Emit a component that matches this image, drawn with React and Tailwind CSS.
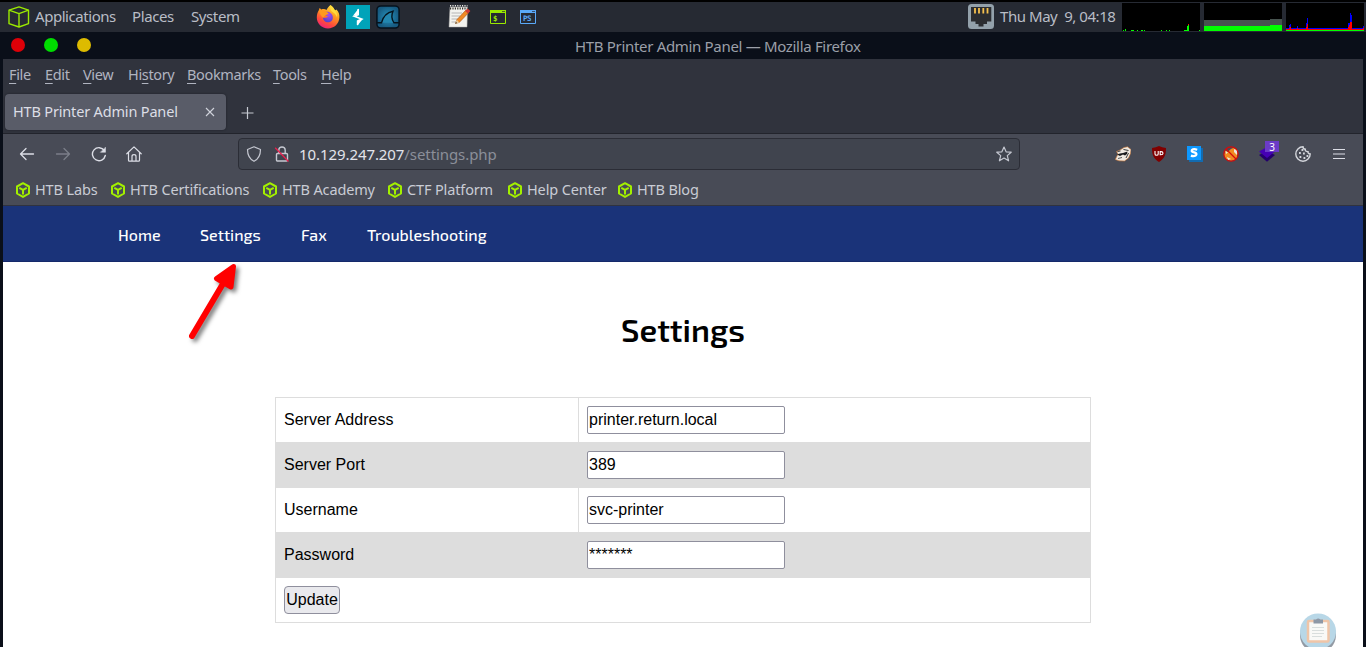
import React from "react";

const UI = "font-['Noto_Sans',sans-serif]";

function Cube({ className }) {
  return (
    <svg className={className} viewBox="0 0 16 16" fill="none" stroke="#a3f000" strokeWidth="2" strokeLinejoin="round">
      <path d="M8 1.200 14 4.500V11.500L8 14.900 2 11.500V4.500Z" />
      <path d="M4.300 5.800 8 7.900 11.700 5.800M8 7.900V12.600" />
    </svg>
  );
}

function PanelCube() {
  return (
    <svg className="h-[22px] w-[22px]" viewBox="0 0 22 22" fill="none" stroke="#9bea00" strokeWidth="1.4" strokeLinejoin="round">
      <path d="M11 .9 20.500 4.200V17.600L11 21 1 17.600V4.200Z" />
      <path d="M1 4.200 11 7.600 20.500 4.200M11 7.600V21" />
    </svg>
  );
}

function FirefoxIcon() {
  return (
    <svg className="h-6 w-6" viewBox="0 0 24 24">
      <defs>
        <linearGradient id="fx" x1="0.8" y1="0" x2="0.3" y2="1">
          <stop offset="0" stopColor="#fff04a" />
          <stop offset=".4" stopColor="#ff9a1f" />
          <stop offset=".75" stopColor="#ff4a3c" />
          <stop offset="1" stopColor="#f0207c" />
        </linearGradient>
        <radialGradient id="fp" cx=".6" cy=".3" r=".8">
          <stop offset="0" stopColor="#a64cf0" />
          <stop offset="1" stopColor="#4a40c8" />
        </radialGradient>
      </defs>
      <path d="M14.500 0C17 1.400 18 3.500 18.500 5 20 5.500 20.500 4.500 20.500 4.500 23 7 23.600 10 23.400 12.500 23 19 18 23.400 12 23.400 5.600 23.400.8 18.500.8 12.500.8 9.500 1.600 7.200 2.800 5.200L3.600 3 5.400 4.600C7 3.800 9 4 10.500 5 11.600 3 12.800 1.200 14.500 0Z" fill="url(#fx)" />
      <path d="M8.500 7.500C11 5.500 16.500 7.500 16.800 12 17 15.800 14.500 17.300 12.300 17.300 9 17.300 7 15 7 12.500 9 13.500 11 12.500 12 11.200 9.500 11 8 9.500 8.500 7.500Z" fill="url(#fp)" />
      <path d="M3 5.500C5 4.500 8 5 9.500 7 11 7 12.400 7.600 12.600 8.600 12 10 9.500 9.600 8.500 11 8.300 12 7.600 12.500 7 12.500 5 11 3.500 8.500 3 5.500Z" fill="#ff9a1f" />
      <path d="M14.500.2C18 3 22 8 21 12.500 20.500 10 19 9 18 8 15 6 13.500 4 14.500.2Z" fill="#ffdd3c" />
    </svg>
  );
}

function BurpIcon() {
  return (
    <svg className="h-6 w-6" viewBox="0 0 24 24">
      <path d="M0 0H24V24H0Z" fill="#00a3b9" />
      <path d="M12.200 4V9.800L8.300 11.300 15.700 14 11.600 16V20" fill="none" stroke="#fff" strokeWidth="1.600" />
      <path d="M7 10.800 12.600 3.500V9.500ZM17 13.800 11.200 20.700V16Z" fill="#fff" />
    </svg>
  );
}

function SharkIcon() {
  return (
    <svg className="h-6 w-6" viewBox="0 0 24 24">
      <defs>
        <radialGradient id="sh"><stop offset="0" stopColor="#2592bd" /><stop offset="1" stopColor="#175a80" /></radialGradient>
      </defs>
      <rect x=".9" y=".9" width="22.200" height="22.200" rx="4" fill="url(#sh)" stroke="#06121c" strokeWidth="1.500" />
      <path d="M1 17.800H5.500C7 12 10.500 7.500 17 6.300 15.200 10.300 15.500 14.300 18 17.800H23" fill="#2387b0" stroke="#05141e" strokeWidth="1.400" />
    </svg>
  );
}

function NotepadIcon() {
  return (
    <svg className="h-[23px] w-[23px]" viewBox="0 0 23 23">
      <path d="M2 2H19.500L19 22H1Z" fill="#f3f3ef" stroke="#aaa" strokeWidth=".5" />
      <path d="M2 3.500H19.500" stroke="#35352f" strokeWidth="2" strokeDasharray="1.200 1.200" />
      <path d="M2 .8H19.500" stroke="#e8e8e4" strokeWidth="1.500" strokeDasharray="1.200 1.200" />
      <path d="M3.500 8H14M3.500 11H12M3.500 14H10M3.500 17H9" stroke="#b5b5b5" />
      <path d="M7.500 18.500 8.800 14.800 17.500 5.500 20.300 8 11.300 17.400Z" fill="#f08a24" stroke="#a95516" strokeWidth=".6" />
      <path d="M17 6 19.500 3.500 22.400 6 20 8.500Z" fill="#d13c35" />
      <path d="M7.300 18.700 8.800 14.800 11.300 17.400Z" fill="#e8cda0" />
      <path d="M7.300 18.700 8 17 9 18.100Z" fill="#222" />
    </svg>
  );
}

function TerminalIcon({ color, label, wide }) {
  return (
    <svg className="h-[14px] w-4" viewBox="0 0 16 14">
      <path d="M.5.5H15.500V13.500H.5Z" fill="none" stroke={color} />
      <path d="M0 0H16V3H0Z" fill={color} />
      <path d="M12 1.500H15" stroke="#262a33" strokeWidth=".7" />
      <text x="3" y="10.500" fill={color} fontSize="7.500" fontWeight="700" fontFamily="DejaVu Sans Mono, monospace" textLength={wide ? 8.5 : 4.5}>{label}</text>
    </svg>
  );
}

function EthernetIcon() {
  return (
    <svg className="h-[25px] w-[26px]" viewBox="0 0 26 25">
      <rect width="26" height="25" rx="3.500" fill="#93a1ab" />
      <path d="M3 3H23.300V17.500H19V20H15.500V22.500H10.500V20H7.500V17.500H3Z" fill="#2b2d31" />
      <path d="M7 4V9.500M11 4V9.500M15.300 4V9.500M19.500 4V9.500" stroke="#f5c04e" strokeWidth="1.800" />
    </svg>
  );
}

const cpuBars = [[1, 1], [3, 2], [9, 1], [10, 1], [11, 1], [15, 1], [19, 1], [20, 1], [22, 1], [39, 1], [44, 1], [47, 1], [62, 1], [63, 1], [64, 1], [65, 5], [66, 7], [77, 1]];

function Graphs() {
  return (
    <div className="flex gap-1 pt-[1px]">
      <svg className="h-7 w-[78px] bg-black" viewBox="0 0 78 28" shapeRendering="crispEdges">
        {cpuBars.map(([x, h]) => <rect key={x} x={x} y={28 - h} width="1" height={h} fill="#00ff00" />)}
        <rect x="66" y="21" width="1" height="1" fill="#ff0000" />
      </svg>
      <svg className="h-7 w-[78px] bg-black" viewBox="0 0 78 28" shapeRendering="crispEdges">
        <path d="M0 17H66V16H78V28H0Z" fill="#47534f" />
        <path d="M0 23H66V22H78V28H0Z" fill="#00ff00" />
      </svg>
      <svg className="h-7 w-[78px] bg-black" viewBox="0 0 78 28" shapeRendering="crispEdges">
        <path d="M0 25H3V22H4V21H5V25H11V23H12V25H20V20H21V15H22V25H62V20H64V10H65V12H66V25H77V23H78V27H0Z" fill="#0000ff" />
        <path d="M0 26H3V25H4V24H5V26H11V25H12V26H20V24H21V21H22V26H62V24H63V22H64V19H66V26H77V25H78V27H0Z" fill="#ff0000" />
        <path d="M0 27H78V28H0Z" fill="#00ff00" />
      </svg>
    </div>
  );
}

function SystemPanel() {
  return (
    <div className={`${UI} flex h-8 shrink-0 items-center border-t-2 border-black bg-[#262a33] pb-[1px] text-[15px] text-[#b9bdc6]`}>
      <div className="ml-2 w-[27px] shrink-0"><PanelCube /></div>
      <span className="w-[97px] shrink-0 tracking-[-0.45px]">Applications</span>
      <span className="w-[59px] shrink-0 tracking-[-0.4px]">Places</span>
      <span className="w-[125px] shrink-0 tracking-[-0.4px]">System</span>
      <div className="flex items-center">
        <FirefoxIcon />
        <div className="ml-[6px]"><BurpIcon /></div>
        <div className="ml-[6px]"><SharkIcon /></div>
        <div className="ml-12"><NotepadIcon /></div>
        <div className="ml-[19px]"><TerminalIcon color="#9bea00" label="$" /></div>
        <div className="ml-[14px]"><TerminalIcon color="#5aa9f8" label="PS" wide /></div>
      </div>
      <div className="ml-auto flex items-center pr-[2px]">
        <EthernetIcon />
        <span className="ml-[6px] w-[122px] whitespace-pre tracking-[-0.45px]">Thu May  9, 04:18</span>
        <Graphs />
      </div>
    </div>
  );
}

function TitleBar() {
  return (
    <div className={`${UI} flex h-[27px] shrink-0 items-center text-[#9b9fa8]`}>
      <div className="flex w-[575px] shrink-0 gap-[19px] pb-[1px] pl-[11px]">
        <span className="h-[14px] w-[14px] rounded-full bg-[#dd0008]" />
        <span className="h-[14px] w-[14px] rounded-full bg-[#00dd00]" />
        <span className="h-[14px] w-[14px] rounded-full bg-[#ddbb00]" />
      </div>
      <span className="whitespace-nowrap pt-[2px] text-[15px] tracking-[-0.32px]">HTB Printer Admin Panel — Mozilla Firefox</span>
    </div>
  );
}

const menus = [
  ["", "F", "ile", "w-[36px]"],
  ["", "E", "dit", "w-[38px]"],
  ["", "V", "iew", "w-[45px]"],
  ["Hi", "s", "tory", "w-[59px]"],
  ["", "B", "ookmarks", "w-[86px]"],
  ["", "T", "ools", "w-[48px]"],
  ["", "H", "elp", "w-[48px]"],
];

function MenuBar() {
  return (
    <div className="flex h-[33px] items-center pb-[1px] pl-[6px] tracking-[-0.35px] text-[#b0b4c0]">
      {menus.map(([a, u, b, w]) => (
        <span key={u + b} className={`${w} shrink-0 whitespace-nowrap`}>
          {a}<span className="underline underline-offset-[3px]">{u}</span>{b}
        </span>
      ))}
    </div>
  );
}

function TabStrip() {
  return (
    <div className="flex h-[42px] shrink-0 border-b border-[#22242c] pt-[2px]">
      <div className="ml-[2px] flex h-9 w-[221px] items-center rounded-[4px] bg-[#595c68] pl-2 text-[#dcdee6] shadow-[0_0_2px_#1b1d24]">
        <span className="w-[192px] whitespace-nowrap tracking-[-0.17px]">HTB Printer Admin Panel</span>
        <svg className="h-[10px] w-[10px]" viewBox="0 0 10 10" stroke="#d0d3db" strokeWidth="1.100"><path d="M1 1 9 9M9 1 1 9" /></svg>
      </div>
      <svg className="ml-[15px] mt-[13px] h-3 w-[13px]" viewBox="0 0 13 12" stroke="#c6cad2" strokeWidth="1.200"><path d="M.5 6H12.500M6.500 0V12" /></svg>
    </div>
  );
}

function NavButtons() {
  return (
    <div className="flex w-[235px] shrink-0 items-center pl-4 text-[#dcdee6]">
      <svg className="h-4 w-4" viewBox="0 0 16 16" fill="none" stroke="currentColor" strokeWidth="1.300" strokeLinecap="round" strokeLinejoin="round"><path d="M14.500 8H1.500M7 2.500 1.500 8 7 13.500" /></svg>
      <svg className="ml-5 h-4 w-4 text-[#7b7e89]" viewBox="0 0 16 16" fill="none" stroke="currentColor" strokeWidth="1.300" strokeLinecap="round" strokeLinejoin="round"><path d="M1.500 8H14.500M9 2.500 14.500 8 9 13.500" /></svg>
      <svg className="ml-5 h-4 w-4" viewBox="0 0 16 16" fill="none" stroke="currentColor" strokeWidth="1.400" strokeLinecap="round" strokeLinejoin="round">
        <path d="M14.300 9.500A6.500 6.500 0 1 1 13.300 4.500" /><path d="M14.500 1.500V6.300H9.700Z" fill="currentColor" strokeWidth=".5" />
      </svg>
      <svg className="ml-[19px] h-4 w-4" viewBox="0 0 16 16" fill="none" stroke="currentColor" strokeWidth="1.200" strokeLinecap="round" strokeLinejoin="round">
        <path d="M.8 7.800 8 .9 15.200 7.800M2.500 6.300V14.200Q2.500 15.200 3.500 15.200H12.500Q13.500 15.200 13.500 14.200V6.300M6 15V10.500Q6 8.700 8 8.700T10 10.500V15" />
      </svg>
    </div>
  );
}

function UrlBar() {
  return (
    <div className="flex h-8 w-[782px] shrink-0 items-center rounded-[4px] border border-[#2b2d36] bg-[#40444e] pl-[7px]">
      <svg className="h-4 w-4" viewBox="0 0 16 16" fill="none" stroke="#c5c8d1" strokeWidth="1.200" strokeLinejoin="round"><path d="M8 .8 14.500 3.500C14.500 9 12.500 13 8 15.300 3.500 13 1.500 9 1.500 3.500Z" /></svg>
      <svg className="ml-3 h-4 w-4" viewBox="0 0 16 16" fill="none" stroke="#c5c8d1" strokeWidth="1.400">
        <rect x="2.500" y="7.500" width="11" height="7.500" rx="1" /><path d="M4.800 7.500V4Q5 1 8 1T11.200 4V7.500" />
        <path d="M1.200 1.800 14.500 15.500" stroke="#e8204e" strokeWidth="1.300" />
      </svg>
      <span className="ml-[9px] w-[697px] whitespace-nowrap text-[15px] tracking-[-0.08px] text-[#e3e5ec]">10.129.247.207<span className="text-[#8b8f99]">/settings.php</span></span>
      <svg className="h-4 w-4 shrink-0" viewBox="0 0 16 16" fill="none" stroke="#c5c8d1" strokeWidth="1.200" strokeLinejoin="round"><path d="M8 1 10.100 5.800 15.200 6.200 11.300 9.600 12.600 14.800 8 12 3.400 14.800 4.700 9.600.8 6.200 5.900 5.800Z" /></svg>
    </div>
  );
}

function Extensions() {
  return (
    <div className="ml-[95px] flex items-center gap-5">
      <svg className="h-4 w-4" viewBox="0 0 16 16">
        <path d="M.3 13.500 3 8 1.500 5.500 5 4 9 1.500 12.500.8 16 3.500 15.500 7.500 13.500 12 9.500 15 4 14.800Z" fill="#eee9e2" stroke="#d0752f" strokeWidth=".6" />
        <path d="M2 8.500 5 7.500 8 7 12.500 5.500 12 8 10 9.500 8 8.500 5 10Z" fill="#17191d" />
        <path d="M2.500 5.500 5.500 5M8.500 3.500 13.500 4.500M13.500 7 11 12" stroke="#222" strokeWidth=".9" />
        <path d="M3 12.500 7 11.500" stroke="#333" strokeWidth=".8" />
      </svg>
      <svg className="h-4 w-4" viewBox="0 0 16 16">
        <path d="M8 0Q11 1.700 15 2C15 9 13.500 12.500 8 16 2.500 12.500 1 9 1 2Q5 1.700 8 0Z" fill="#800000" />
        <path d="M4 5V8Q4 9.300 5.600 9.300T7.200 8V5M9.200 5V9.200M9.200 5.600H10Q12 5.600 12 7.200T10 8.800H9.200" fill="none" stroke="#fff" strokeWidth="1.100" />
      </svg>
      <svg className="h-4 w-4" viewBox="0 0 16 16">
        <path d="M2 2H16V16H2Z" fill="#126bb0" /><path d="M0 0H14V14H0Z" fill="#0d98ff" />
        <path d="M10.200 3.700Q6.500 2.400 4.900 4C3.700 6 7 6.100 8.700 6.900 11 8.800 7.700 11 3.900 9.600" fill="none" stroke="#fff" strokeWidth="2.200" />
      </svg>
      <svg className="h-4 w-4" viewBox="0 0 16 16">
        <path d="M2.500 4.500 5 6Q8 2 11 2L15 5 13.500 13 8 15 3 13 1 9Z" fill="#f18b20" />
        <path d="M11 3 14.500 4.500 14 9 11 6ZM4 11 8 13 5 14ZM2.500 5 5 6.500 3 8Z" fill="#eee8dd" />
        <circle cx="8" cy="8" r="7.200" fill="none" stroke="#d60b0b" strokeWidth="1.200" />
        <path d="M3 3 13 13" stroke="#d60b0b" strokeWidth="1.200" />
      </svg>
      <div className="relative">
        <svg className="h-4 w-4" viewBox="0 0 16 16">
          <path d="M0 9 8 4.500 16 9 8 15.800Z" fill="#24006d" /><path d="M0 5.500 8 1 16 5.500 8 12Z" fill="#4500b5" />
        </svg>
        <span className="absolute -top-[5px] left-[6px] flex h-[11px] w-[14px] items-center justify-center bg-[#6b3bc7] text-[10px] leading-none text-white">3</span>
      </div>
      <svg className="h-4 w-4" viewBox="0 0 16 16" fill="none" stroke="#d4d6dc" strokeWidth="1.400">
        <path d="M8 .8A7.200 7.200 0 1 0 15.200 8C13.700 8 12.800 7 13 5.700 11 5.800 10 4.800 10.300 3.300 9 3.300 8 2.300 8 .8Z" />
        <path d="M6.500 4H8.300M4 7H5.800M8 7.500H9.800M4.500 11H6.300M8.500 12H10.300M11.500 10H13.300" strokeWidth="1.800" />
      </svg>
      <svg className="h-4 w-4" viewBox="0 0 16 16" stroke="#dcdee6" strokeWidth="1.200"><path d="M2 3.500H14M2 8H14M2 12.500H14" /></svg>
    </div>
  );
}

const bookmarks = [
  ["HTB Labs", "w-[95px]"],
  ["HTB Certifications", "w-[152px]"],
  ["HTB Academy", "w-[125px]"],
  ["CTF Platform", "w-[120px]"],
  ["Help Center", "w-[110px]"],
  ["HTB Blog", "w-[100px]"],
];

function Bookmarks() {
  return (
    <div className="flex h-[31px] items-center pl-3 tracking-[-0.14px] text-[#c9ccd5]">
      {bookmarks.map(([label, w]) => (
        <div key={label} className={`${w} flex shrink-0 items-center whitespace-nowrap`}>
          <Cube className="mr-1 h-4 w-4 shrink-0" />{label}
        </div>
      ))}
    </div>
  );
}

const rows = [
  ["Server Address", "printer.return.local"],
  ["Server Port", "389"],
  ["Username", "svc-printer"],
  ["Password", "*******"],
];

function SettingsPage() {
  return (
    <div className="relative flex min-h-0 flex-1 flex-col bg-white text-black">
      <nav className="flex h-14 shrink-0 items-center border-b border-[#15296a] bg-[#1a3379] pb-[1px] pl-[115px] pt-1 font-['Exo_2','Noto_Sans',sans-serif] text-[16px] font-medium text-white">
        <span className="w-[82px]">Home</span>
        <span className="w-[101px]">Settings</span>
        <span className="w-[66px]">Fax</span>
        <span>Troubleshooting</span>
      </nav>
      <h1 className="mt-[43px] h-[92px] text-center font-['Exo_2','Noto_Sans',sans-serif] text-[32px] font-semibold leading-[48px]">Settings</h1>
      <div className="ml-[272px] flex h-[226px] w-[816px] shrink-0 flex-col border border-[#dddddd] font-['Liberation_Sans',sans-serif] text-[16px] tracking-normal">
        {rows.map(([label, value], i) => (
          <div key={label} className={`flex items-center ${i % 2 ? "h-[46px] bg-[#dddddd]" : "h-[44px]"}`}>
            <span className="flex h-full w-[303px] items-center border-r border-[#dddddd] pl-2">{label}</span>
            <input className="ml-2 h-7 w-[198px] rounded-[2px] border border-[#8f8f9d] bg-white px-[1px] outline-none" defaultValue={value} />
          </div>
        ))}
        <div className="flex h-[44px] items-center pl-2">
          <button className="h-7 w-14 rounded-[4px] border border-[#8f8f9d] bg-[#e9e9ed]">Update</button>
        </div>
      </div>
      <svg className="absolute left-[177px] top-[49px] h-24 w-[70px]" viewBox="180 255 70 96">
        <g className="drop-shadow-[3px_3px_2px_rgba(0,0,0,0.5)]" fill="#ff0000" stroke="#ff0000" strokeLinejoin="round" strokeLinecap="round">
          <path d="M192 336 224 282" strokeWidth="6" />
          <path d="M233.500 266.500 216.500 278.500 231 287Z" strokeWidth="5" />
        </g>
      </svg>
      <svg className="absolute bottom-0 right-[26px] h-[34px] w-[38px]" viewBox="0 0 38 34">
        <circle cx="19" cy="22" r="18" fill="#929aa4" /><circle cx="19" cy="18.500" r="18" fill="#b8d7e7" />
        <rect x="9" y="8" width="20.500" height="20.500" rx="1" fill="#f9f9f7" stroke="#efc5a8" strokeWidth="2.500" />
        <path d="M14.500 6.500H17Q19 4.500 21.500 6.500H24V10.500H14.500Z" fill="#8e98a6" />
        <path d="M13 14.500H25M13 17.500H25M13 20.500H25M13 23.500H23" stroke="#d9dedd" />
      </svg>
    </div>
  );
}

export default function App() {
  return (
    <div className="flex h-[647px] w-[1366px] flex-col overflow-hidden bg-[#0a0f19]">
      <SystemPanel />
      <TitleBar />
      <div className={`${UI} mx-[3px] flex min-h-0 flex-1 flex-col overflow-hidden bg-[#30333d] text-[14.5px]`}>
        <MenuBar />
        <TabStrip />
        <div className="h-[72px] shrink-0 border-b border-[#30333f] bg-[#484b56]">
          <div className="flex h-10 items-center"><NavButtons /><UrlBar /><Extensions /></div>
          <Bookmarks />
        </div>
        <SettingsPage />
      </div>
    </div>
  );
}
